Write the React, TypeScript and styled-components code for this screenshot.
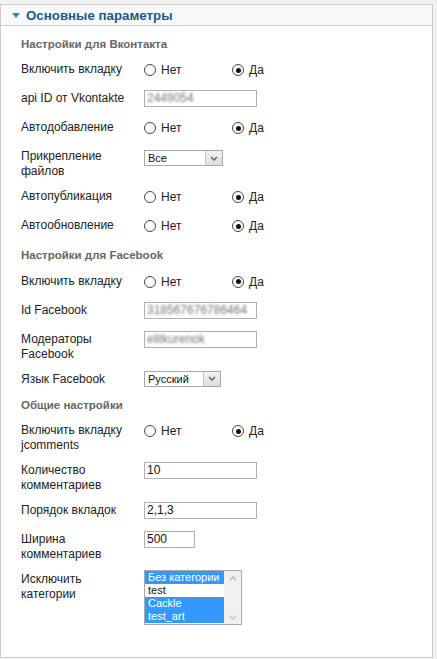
import React from 'react';
import styled, { createGlobalStyle } from 'styled-components';

const GlobalStyle = createGlobalStyle`
  html, body {
    margin: 0;
    padding: 0;
    background: #f2f2f2;
  }
  body {
    font-family: "Liberation Sans", Arial, sans-serif;
    font-size: 12px;
    color: #222;
  }
`;

const Page = styled.div`
  width: 437px;
  height: 659px;
  padding: 4px 4px 0 0;
  box-sizing: border-box;
`;

const Panel = styled.div`
  width: 433px;
  height: 654px;
  box-sizing: border-box;
  border: 1px solid #cccccc;
  background: #fff;
`;

const PanelHeader = styled.div`
  height: 20px;
  display: flex;
  align-items: center;
  gap: 6px;
  padding-left: 11px;
  background: #f9f9f9;
  border-bottom: 1px solid #cccccc;
`;

const Triangle = styled.span`
  width: 0;
  height: 0;
  border-left: 4px solid transparent;
  border-right: 4px solid transparent;
  border-top: 5px solid #2f86bd;
  margin-top: 1px;
`;

const PanelTitle = styled.h3`
  margin: 0;
  font-size: 13.3px;
  font-weight: bold;
  color: #1b5a87;
`;

const Body = styled.div`
  padding: 10.5px 0 0 20px;
`;

const SectionTitle = styled.div<{ $first?: boolean }>`
  font-weight: bold;
  font-size: 11.5px;
  color: #666;
  line-height: 15px;
  margin: ${p => (p.$first ? '0' : '11px')} 0 8.5px 0;
`;

const Row = styled.div`
  display: flex;
  align-items: flex-start;
  margin-bottom: 8px;
`;

const Label = styled.div`
  width: 123px;
  padding-top: 2px;
  line-height: 15px;
  color: #222;
`;

const Controls = styled.div`
  display: flex;
  align-items: flex-start;
`;

const RadioGroup = styled.div`
  display: flex;
  height: 21px;
  padding-bottom: 1px;
  box-sizing: border-box;
  align-items: center;
`;

const RadioOption = styled.label`
  width: 88px;
  display: flex;
  align-items: center;
  gap: 5px;
  color: #222;
`;

const RadioCircle = styled.span<{ $checked?: boolean }>`
  width: 10px;
  height: 10px;
  border: 1px solid #444;
  border-radius: 50%;
  background: #fff;
  display: flex;
  align-items: center;
  justify-content: center;
  &::after {
    content: '';
    width: 5px;
    height: 5px;
    border-radius: 50%;
    background: ${p => (p.$checked ? '#111' : 'transparent')};
  }
`;

const TextInput = styled.div<{ $width: number; $blur?: boolean }>`
  width: ${p => p.$width}px;
  height: 17px;
  margin: 1px 0 3px;
  box-sizing: border-box;
  border: 1px solid #b0b0b0;
  padding-left: 2px;
  line-height: 15px;
  font-size: 12px;
  color: ${p => (p.$blur ? '#777' : '#111')};
  overflow: hidden;
  white-space: nowrap;
  & > span {
    display: inline-block;
    filter: ${p => (p.$blur ? 'blur(1.2px)' : 'none')};
  }
`;

const Select = styled.div<{ $width: number; $offset: number }>`
  width: ${p => p.$width}px;
  height: 16px;
  margin-top: ${p => p.$offset}px;
  box-sizing: border-box;
  border: 1px solid #a9a9a9;
  display: flex;
  background: #fff;
`;

const SelectValue = styled.span`
  flex: 1;
  padding-left: 3px;
  font-size: 11px;
  line-height: 14px;
  color: #111;
`;

const SelectButton = styled.span`
  width: 16px;
  border-left: 1px solid #c8c8c8;
  background: linear-gradient(#f2f2f2, #dedede);
  display: flex;
  align-items: center;
  justify-content: center;
`;

const ListBox = styled.div`
  width: 98px;
  height: 55px;
  box-sizing: border-box;
  border: 1px solid #a9a9a9;
  display: flex;
  background: #fff;
`;

const ListItems = styled.div`
  flex: 1;
`;

const ListItem = styled.div<{ $selected?: boolean }>`
  height: 13px;
  line-height: 13px;
  padding-left: 3px;
  font-size: 11px;
  white-space: nowrap;
  background: ${p => (p.$selected ? '#3399ff' : '#fff')};
  color: ${p => (p.$selected ? '#fff' : '#111')};
`;

const ScrollBar = styled.div`
  width: 17px;
  background: #f0f0f0;
  display: flex;
  flex-direction: column;
  justify-content: space-between;
  align-items: center;
  padding: 5px 0 4px;
`;

const Chevron = ({ up }: { up?: boolean }) => (
  <svg width="8" height="5" viewBox="0 0 8 5">
    <path
      d={up ? 'M1 4 L4 1 L7 4' : 'M1 1 L4 4 L7 1'}
      fill="none"
      stroke={up ? '#b8b8b8' : '#c4c4c4'}
      strokeWidth="1.4"
    />
  </svg>
);

const SelectArrow = () => (
  <svg width="8" height="5" viewBox="0 0 8 5">
    <path d="M1 1 L4 4 L7 1" fill="none" stroke="#666" strokeWidth="1.5" />
  </svg>
);

const YesNo = () => (
  <RadioGroup>
    <RadioOption>
      <RadioCircle />
      Нет
    </RadioOption>
    <RadioOption>
      <RadioCircle $checked />
      Да
    </RadioOption>
  </RadioGroup>
);

const Dropdown = ({ value, width, offset }: { value: string; width: number; offset: number }) => (
  <Select $width={width} $offset={offset}>
    <SelectValue>{value}</SelectValue>
    <SelectButton>
      <SelectArrow />
    </SelectButton>
  </Select>
);

const categories = [
  { name: 'Без категории', selected: true },
  { name: 'test', selected: false },
  { name: 'Cackle', selected: true },
  { name: 'test_art', selected: true },
];

const App = () => {
  return (
    <Page>
      <GlobalStyle />
      <Panel>
        <PanelHeader>
          <Triangle />
          <PanelTitle>Основные параметры</PanelTitle>
        </PanelHeader>
        <Body>
          <SectionTitle $first>Настройки для Вконтакта</SectionTitle>
          <Row>
            <Label>Включить вкладку</Label>
            <Controls><YesNo /></Controls>
          </Row>
          <Row>
            <Label>api ID от Vkontakte</Label>
            <Controls>
              <TextInput $width={113} $blur><span>2449054</span></TextInput>
            </Controls>
          </Row>
          <Row>
            <Label>Автодобавление</Label>
            <Controls><YesNo /></Controls>
          </Row>
          <Row>
            <Label>Прикрепление<br />файлов</Label>
            <Controls><Dropdown value="Все" width={79} offset={3} /></Controls>
          </Row>
          <Row>
            <Label>Автопубликация</Label>
            <Controls><YesNo /></Controls>
          </Row>
          <Row>
            <Label>Автообновление</Label>
            <Controls><YesNo /></Controls>
          </Row>

          <SectionTitle>Настройки для Facebook</SectionTitle>
          <Row>
            <Label>Включить вкладку</Label>
            <Controls><YesNo /></Controls>
          </Row>
          <Row>
            <Label>Id Facebook</Label>
            <Controls>
              <TextInput $width={113} $blur><span>318567676786464</span></TextInput>
            </Controls>
          </Row>
          <Row>
            <Label>Модераторы<br />Facebook</Label>
            <Controls>
              <TextInput $width={113} $blur><span>elitkurenok</span></TextInput>
            </Controls>
          </Row>
          <Row>
            <Label>Язык Facebook</Label>
            <Controls><Dropdown value="Русский" width={77} offset={1} /></Controls>
          </Row>

          <SectionTitle>Общие настройки</SectionTitle>
          <Row>
            <Label>Включить вкладку<br />jcomments</Label>
            <Controls><YesNo /></Controls>
          </Row>
          <Row>
            <Label>Количество<br />комментариев</Label>
            <Controls><TextInput $width={113}>10</TextInput></Controls>
          </Row>
          <Row>
            <Label>Порядок вкладок</Label>
            <Controls><TextInput $width={113}>2,1,3</TextInput></Controls>
          </Row>
          <Row>
            <Label>Ширина<br />комментариев</Label>
            <Controls><TextInput $width={51}>500</TextInput></Controls>
          </Row>
          <Row>
            <Label>Исключить<br />категории</Label>
            <Controls>
              <ListBox>
                <ListItems>
                  {categories.map(c => (
                    <ListItem key={c.name} $selected={c.selected}>{c.name}</ListItem>
                  ))}
                </ListItems>
                <ScrollBar>
                  <Chevron up />
                  <Chevron />
                </ScrollBar>
              </ListBox>
            </Controls>
          </Row>
        </Body>
      </Panel>
    </Page>
  );
};

export default App;
